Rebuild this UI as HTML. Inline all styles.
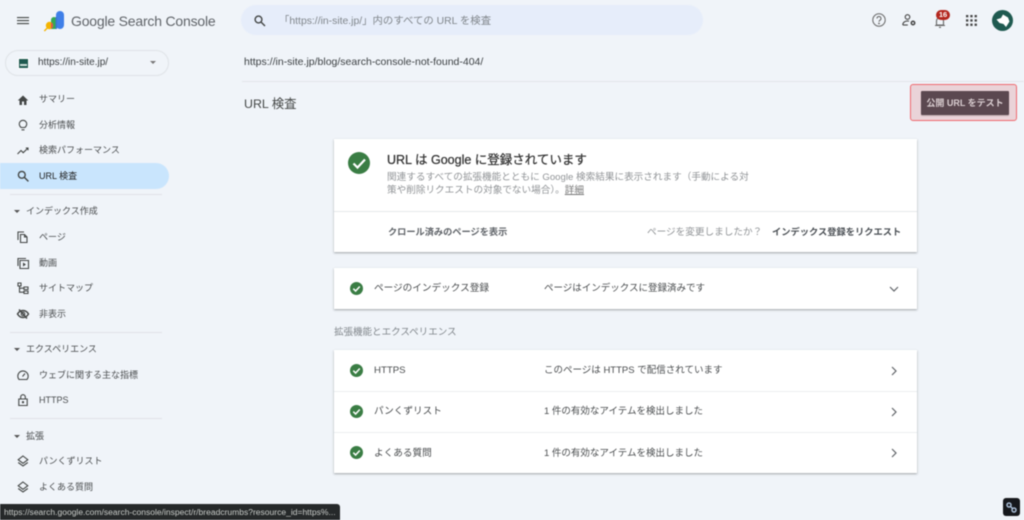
<!DOCTYPE html>
<html lang="ja"><head><meta charset="utf-8"><title>URL 検査</title>
<style>
*{box-sizing:border-box}
html,body{margin:0;padding:0}
body{width:1024px;height:520px;overflow:hidden;background:#f0f4f9;position:relative;font-family:"Liberation Sans","Noto Sans CJK JP",sans-serif;color:#444746}
#w{position:absolute;left:0;top:0;width:1024px;height:520px;filter:blur(.4px)}
.t{position:absolute;white-space:nowrap;line-height:14px}
.n{font-size:9px;left:39px;color:#4a4d4f;height:14px}
.h{font-size:9px;left:26px;color:#4a4d4f}
svg{position:absolute;overflow:visible}
.ic{left:17px;width:12px;height:12px;fill:none;stroke:#444746;stroke-width:1.1}
.arr{position:absolute;left:14px;width:0;height:0;border-left:3px solid transparent;border-right:3px solid transparent;border-top:3px solid #555}
.div{position:absolute;left:10px;width:152px;height:1px;background:#e0e3e7}
.card{position:absolute;left:334px;width:583px;background:#fff;box-shadow:0 1px 2px rgba(60,64,67,.45)}
.line{position:absolute;left:0;right:0;height:1px;background:#eceef0}
.rowt{font-size:9.650px;color:#4a4d4f}
.val{font-size:9.500px;color:#4a4d4f}
</style></head><body><div id="w">

<!-- top bar -->
<svg style="left:17px;top:17px" width="12" height="8"><path d="M0 .6h12M0 3.600h12M0 6.600h12" stroke="#444746" stroke-width="1.100"/></svg>
<svg style="left:44px;top:11px" width="20" height="21" viewBox="0 0 20 21">
<rect x="12" y="0" width="8" height="18" rx="4" fill="#3f7fe8"/>
<path d="M7 9a3 3 0 0 1 6 0v9H7z" fill="#34a853"/>
<path d="M11.500 6h1.500v12h-1.500z" fill="#3a78c8"/>
<circle cx="5.500" cy="14.500" r="3.700" fill="#f4b400"/>
<path d="M7 11.200a3.700 3.700 0 0 1 0 6.600z" fill="#d9534f"/>
<path d="M.3 20l3-3" stroke="#f4b400" stroke-width="1.400"/>
</svg>
<div class="t" style="left:71px;top:12px;font-size:14px;line-height:18px;letter-spacing:-.2px;color:#5f6368">Google Search Console</div>

<div style="position:absolute;left:241px;top:5px;width:462px;height:30px;border-radius:15px;background:#e6edfa"></div>
<svg style="left:254px;top:15px" width="12" height="11" fill="none" stroke="#444746" stroke-width="1.400"><circle cx="4.500" cy="4.500" r="3.400"/><path d="M7 7l4 4"/></svg>
<div class="t" style="left:279px;top:15px;font-size:10.400px;color:#80868b">「https://in-site.jp/」内のすべての URL を検査</div>

<svg style="left:872px;top:13px" width="14" height="14" fill="none" stroke="#666" stroke-width="1"><circle cx="7" cy="7" r="6.200"/><path d="M5 5.500a2 2 0 1 1 3 1.700c-.7.500-1 .8-1 1.600"/><circle cx="7" cy="10.500" r=".4"/></svg>
<svg style="left:902px;top:14px" width="14" height="13" fill="none" stroke="#444" stroke-width="1.100"><circle cx="5.500" cy="3" r="2.300"/><path d="M.8 11c0-2.700 2.300-4 4.700-4 .5 0 1 0 1.500.2"/><path d="M.8 11h5"/><circle cx="11" cy="9" r="1.700" stroke-width="1.500"/></svg>
<svg style="left:934px;top:15px" width="12" height="13" fill="none" stroke="#666" stroke-width="1.100"><path d="M2.500 10V6a3.500 3.500 0 0 1 7 0v4zM1 10.500h10M5 12.300h2"/></svg>
<div style="position:absolute;left:936px;top:10px;width:14px;height:9.500px;border-radius:5px;background:#b3261e;color:#fff;font-size:7.500px;line-height:9.500px;text-align:center;font-weight:bold">16</div>
<svg style="left:966px;top:15px" width="11" height="11" fill="#444"><rect x="0" y="0" width="2.300" height="2.300"/><rect x="4.300" y="0" width="2.300" height="2.300"/><rect x="8.600" y="0" width="2.300" height="2.300"/><rect x="0" y="4.300" width="2.300" height="2.300"/><rect x="4.300" y="4.300" width="2.300" height="2.300"/><rect x="8.600" y="4.300" width="2.300" height="2.300"/><rect x="0" y="8.600" width="2.300" height="2.300"/><rect x="4.300" y="8.600" width="2.300" height="2.300"/><rect x="8.600" y="8.600" width="2.300" height="2.300"/></svg>
<svg style="left:992px;top:10px" width="21" height="21"><circle cx="10.500" cy="10.500" r="10.500" fill="#1f5a50"/><path d="M4.500 9.500L9 8l2-3.500 5 3 1.500 4-3.500 5.500-2.500-3-4-1z" fill="#fff"/></svg>

<!-- property selector -->
<div style="position:absolute;left:5px;top:50px;width:164px;height:26px;border:1px solid #dfe3e7;border-radius:13px"></div>
<div style="position:absolute;left:18px;top:58px;width:11px;height:11px;background:#1f5a50;border:1px solid #fff"></div>
<div style="position:absolute;left:20px;top:64px;width:7px;height:2px;background:#cfe0da"></div>
<div class="t" style="left:38px;top:56px;font-size:10px;color:#3c4043">https://in-site.jp/</div>
<div class="arr" style="left:150px;top:61px;border-left-width:3.500px;border-right-width:3.500px;border-top:3.500px solid #777"></div>

<!-- nav -->
<svg class="ic" style="top:94px;stroke:none;fill:#444746" viewBox="0 0 12 12"><path d="M6 1.500L.8 6.500h1.700V11h2.500V7.500h2V11h2.500V6.500h1.700z"/></svg>
<div class="t n" style="top:92px">サマリー</div>
<svg class="ic" style="top:119px" viewBox="0 0 12 12"><path d="M4.200 8.500C3 7.600 2.300 6.500 2.300 5a3.700 3.700 0 0 1 7.400 0c0 1.500-.7 2.600-1.900 3.500zM4.500 10.800h3"/></svg>
<div class="t n" style="top:118px">分析情報</div>
<svg class="ic" style="top:145px" viewBox="0 0 12 12"><path d="M.5 9l3.500-3.500 2.200 2.200L11 3M8.800 3H11v2.200"/></svg>
<div class="t n" style="top:143px">検索パフォーマンス</div>
<div style="position:absolute;left:0;top:163px;width:169px;height:26px;background:#c9e5fd;border-radius:0 13px 13px 0"></div>
<svg class="ic" style="top:170px;stroke-width:1.400" viewBox="0 0 12 12"><circle cx="4.800" cy="4.800" r="3.400"/><path d="M7.400 7.400l4 4"/></svg>
<div class="t n" style="top:169px;color:#1f1f1f">URL 検査</div>
<div class="div" style="top:194px"></div>

<div class="arr" style="top:210px"></div>
<div class="t h" style="top:204px">インデックス作成</div>
<svg class="ic" style="top:231px" viewBox="0 0 12 12"><path d="M1 9V1h6M3.500 3.500h4l2.500 2.500v5.500H3.500zM7.500 3.500V6H10"/></svg>
<div class="t n" style="top:230px">ページ</div>
<svg class="ic" style="top:257px" viewBox="0 0 12 12"><path d="M1 9V1.500h8M3 3.500h8.500v8H3z"/><path d="M6 5.500v4l3-2z" fill="#444746" stroke="none"/></svg>
<div class="t n" style="top:256px">動画</div>
<svg class="ic" style="top:282px" viewBox="0 0 12 12"><path d="M1 1h3v3H1zM7 5h4v2.500H7zM7 9h4v2.500H7zM2.500 4v6.200H7M2.500 6.200H7"/></svg>
<div class="t n" style="top:281px">サイトマップ</div>
<svg class="ic" style="top:308px" viewBox="0 0 12 12"><path d="M.5 6C2 3.500 4 2.500 6 2.500s4 1 5.500 3.500C10 8.500 8 9.500 6 9.500S2 8.500.5 6zM2 1.500l8 9" stroke-width="1.400"/><circle cx="6" cy="6" r="1.800"/></svg>
<div class="t n" style="top:307px">非表示</div>
<div class="div" style="top:332px"></div>

<div class="arr" style="top:348px"></div>
<div class="t h" style="top:342px">エクスペリエンス</div>
<svg class="ic" style="top:369px" viewBox="0 0 12 12"><path d="M2 10.500a5.200 5.200 0 1 1 8 0zM5.500 7.500L8 4.500"/></svg>
<div class="t n" style="top:368px">ウェブに関する主な指標</div>
<svg class="ic" style="top:394px" viewBox="0 0 12 12"><path d="M1.800 5h8.400v6.500H1.800zM3.700 5V3a2.300 2.300 0 0 1 4.600 0v2"/><circle cx="6" cy="8.200" r=".6" fill="#444746"/></svg>
<div class="t n" style="top:393px">HTTPS</div>
<div class="div" style="top:418px"></div>

<div class="arr" style="top:435px"></div>
<div class="t h" style="top:429px">拡張</div>
<svg class="ic" style="top:455px" viewBox="0 0 12 12"><path d="M6 1l4.800 3.700L6 8.300 1.200 4.700zM1.200 7.500L6 11l4.800-3.500"/></svg>
<div class="t n" style="top:454px">パンくずリスト</div>
<svg class="ic" style="top:481px" viewBox="0 0 12 12"><path d="M6 1l4.800 3.700L6 8.300 1.200 4.700zM1.200 7.500L6 11l4.800-3.500"/></svg>
<div class="t n" style="top:480px">よくある質問</div>

<!-- status bar -->
<div style="position:absolute;left:0;top:504px;width:340px;height:16px;background:#26292a;border-radius:0 3px 0 0"></div>
<div class="t" style="left:4px;top:505px;font-size:8.530px;color:#c9ccc9;width:334px;overflow:hidden">https://search.google.com/search-console/inspect/r/breadcrumbs?resource_id=https%...</div>

<!-- main -->
<div class="t" style="left:244px;top:55px;font-size:10.500px;color:#3c4043">https://in-site.jp/blog/search-console-not-found-404/</div>
<div style="position:absolute;left:242px;top:81px;width:782px;height:1px;background:#e3e6ea"></div>
<div class="t" style="left:244px;top:96px;font-size:12.400px;line-height:16px;color:#444746">URL 検査</div>

<div style="position:absolute;left:910px;top:84px;width:107px;height:37px;background:#ead3d8;border:1.500px solid #ef6a6f;border-radius:3px"></div>
<div style="position:absolute;left:921px;top:91px;width:88px;height:24px;background:#5b4850;border-radius:1px;box-shadow:0 1px 1px rgba(0,0,0,.2)"></div>
<div class="t" style="left:921px;top:96px;width:88px;text-align:center;font-size:9px;font-weight:bold;color:#d9cdd0">公開 URL をテスト</div>

<!-- card 1 -->
<div class="card" style="top:139px;height:113px">
<div class="line" style="top:72px;background:#e6e8ea"></div>
</div>
<svg style="left:348px;top:152px" width="22" height="22"><circle cx="11" cy="11" r="11" fill="#3a7d44"/><path d="M5.500 11.500l4 4 7.500-8" fill="none" stroke="#fff" stroke-width="2.200"/></svg>
<div class="t" style="left:387px;top:152px;font-size:12.500px;line-height:16px;color:#333;-webkit-text-stroke:.25px #333">URL は Google に登録されています</div>
<div class="t" style="left:387px;top:171px;font-size:9.620px;color:#919497">関連するすべての拡張機能とともに Google 検索結果に表示されます（手動による対</div>
<div class="t" style="left:387px;top:184px;font-size:9.620px;color:#919497">策や削除リクエストの対象でない場合）。<span style="text-decoration:underline;color:#777">詳細</span></div>
<div class="t" style="left:388px;top:225px;font-size:9.200px;font-weight:bold;color:#5f6368">クロール済みのページを表示</div>
<div class="t" style="left:647px;top:226px;font-size:9.640px;color:#919497">ページを変更しましたか？</div>
<div class="t" style="left:772px;top:225px;font-size:9.250px;font-weight:bold;color:#4a4f54">インデックス登録をリクエスト</div>

<!-- card 2 -->
<div class="card" style="top:268px;height:41px"></div>
<svg style="left:350px;top:282px" width="13" height="13"><circle cx="6.500" cy="6.500" r="6.500" fill="#3a7d44"/><path d="M3.300 6.700l2.300 2.300 4.200-4.500" fill="none" stroke="#fff" stroke-width="1.500"/></svg>
<div class="t rowt" style="left:374px;top:282px">ページのインデックス登録</div>
<div class="t val" style="left:544px;top:282px">ページはインデックスに登録済みです</div>
<svg style="left:889px;top:286px" width="10" height="6" fill="none" stroke="#5f6368" stroke-width="1.200"><path d="M1 1l4 4 4-4"/></svg>

<div class="t" style="left:334px;top:326px;font-size:9.530px;color:#80868b">拡張機能とエクスペリエンス</div>

<!-- card 3 -->
<div class="card" style="top:350px;height:123px">
<div class="line" style="top:41px"></div>
<div class="line" style="top:82px"></div>
</div>
<svg style="left:350px;top:364px" width="13" height="13"><circle cx="6.500" cy="6.500" r="6.500" fill="#3a7d44"/><path d="M3.300 6.700l2.300 2.300 4.200-4.500" fill="none" stroke="#fff" stroke-width="1.500"/></svg>
<div class="t rowt" style="left:374px;top:364px">HTTPS</div>
<div class="t val" style="left:544px;top:364px">このページは HTTPS で配信されています</div>
<svg style="left:891px;top:366px" width="6" height="10" fill="none" stroke="#5f6368" stroke-width="1.200"><path d="M1 1l4 4-4 4"/></svg>

<svg style="left:350px;top:405px" width="13" height="13"><circle cx="6.500" cy="6.500" r="6.500" fill="#3a7d44"/><path d="M3.300 6.700l2.300 2.300 4.200-4.500" fill="none" stroke="#fff" stroke-width="1.500"/></svg>
<div class="t rowt" style="left:374px;top:405px">パンくずリスト</div>
<div class="t val" style="left:544px;top:405px">1 件の有効なアイテムを検出しました</div>
<svg style="left:891px;top:407px" width="6" height="10" fill="none" stroke="#5f6368" stroke-width="1.200"><path d="M1 1l4 4-4 4"/></svg>

<svg style="left:350px;top:446px" width="13" height="13"><circle cx="6.500" cy="6.500" r="6.500" fill="#3a7d44"/><path d="M3.300 6.700l2.300 2.300 4.200-4.500" fill="none" stroke="#fff" stroke-width="1.500"/></svg>
<div class="t rowt" style="left:374px;top:447px">よくある質問</div>
<div class="t val" style="left:544px;top:447px">1 件の有効なアイテムを検出しました</div>
<svg style="left:891px;top:448px" width="6" height="10" fill="none" stroke="#5f6368" stroke-width="1.200"><path d="M1 1l4 4-4 4"/></svg>

<!-- bottom right widget -->
<div style="position:absolute;left:1003px;top:498px;width:17px;height:18px;background:#16181c;border-radius:3px"></div>
<svg style="left:1006px;top:502px" width="11" height="11" fill="none" stroke="#a9bdd6" stroke-width="1.500"><circle cx="3" cy="3" r="2"/><circle cx="8" cy="8" r="2"/><path d="M4.500 4.500l2 2"/></svg>
</div></body></html>
